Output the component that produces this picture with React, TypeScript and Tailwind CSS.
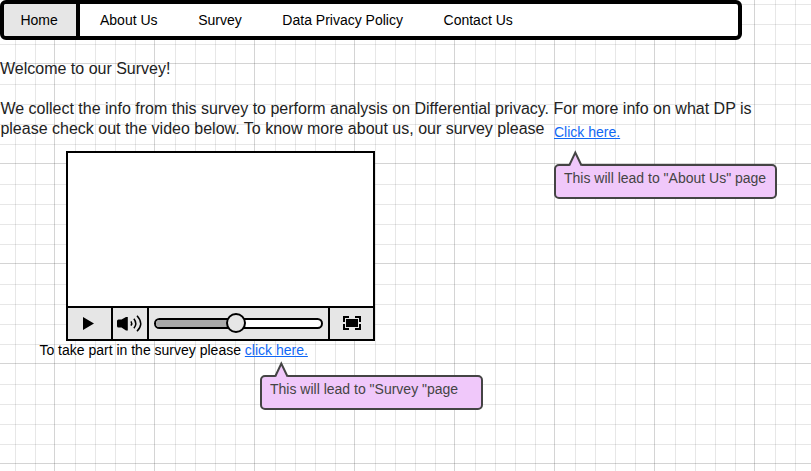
import type { ReactNode } from "react";

const navItems = [
  { label: "About Us", gap: "ml-5" },
  { label: "Survey", gap: "ml-[40.6px]" },
  { label: "Data Privacy Policy", gap: "ml-[40.6px]" },
  { label: "Contact Us", gap: "ml-[40.6px]" },
];

function NavBar() {
  return (
    <nav className="flex h-10 w-[742px] overflow-hidden rounded-md border-4 border-black bg-white text-sm leading-8 text-black">
      <a className="w-[76px] shrink-0 border-r-4 border-black bg-[#e6e6e6] pl-[16.4px]">Home</a>
      {navItems.map((item) => (
        <a key={item.label} className={`${item.gap} whitespace-nowrap`}>
          {item.label}
        </a>
      ))}
    </nav>
  );
}

function Callout({ children }: { children: ReactNode }) {
  return (
    <div className="relative h-[35px] w-[223px] rounded-[5px] border-2 border-[#444] bg-[#f0c8fa] pl-2 pt-[2px] text-sm leading-5 whitespace-nowrap text-[#444]">
      <svg className="absolute -top-[16px] left-3" width="16" height="17" viewBox="0 0 16 17">
        <path d="M1 17 L7.3 3 L14 17 Z" fill="#f0c8fa" />
        <path d="M1.2 15.5 L7.3 2.5 L13.5 15.5" fill="none" stroke="#444" strokeWidth="2" />
      </svg>
      {children}
    </div>
  );
}

function VideoPlayer() {
  return (
    <div className="ml-[66px] flex h-[190px] w-[309px] flex-col border-2 border-black bg-white">
      <div className="flex-1" />
      <div className="flex h-[33px] border-t-2 border-black bg-[#e6e6e6]">
        <div className="w-[45px] border-r-2 border-black">
          <svg width="43" height="31" viewBox="0 0 43 31">
            <path d="M15 9 L26 15.5 L15 22 Z" />
          </svg>
        </div>
        <div className="w-[36px] border-r-2 border-black">
          <svg width="34" height="31" viewBox="0 0 34 31">
            <path d="M4 13 Q4 11.5 5.5 11.5 H8.5 L13 9 H14.8 V22.4 H13 L8.5 19.5 H5.5 Q4 19.5 4 18 Z" />
            <g fill="none" stroke="#000" strokeWidth="1.5">
              <path d="M18 13.3 Q19.5 15.5 18 17.7" />
              <path d="M20.9 10.7 Q24.6 15.5 20.9 20.3" />
              <path d="M24 7.7 Q31.4 15.5 24 23.3" />
            </g>
          </svg>
        </div>
        <div className="flex w-[181px] items-center pl-[5px]">
          <div className="relative h-[11px] w-[169px] rounded-full border-2 border-black bg-white">
            <div className="h-full w-[80px] rounded-l-full bg-[#a9a9a9]" />
            <div className="absolute -top-[7px] left-[70px] size-5 rounded-full border-2 border-black bg-[#e6e6e6]" />
          </div>
        </div>
        <div className="flex-1 border-l-2 border-black">
          <svg width="43" height="31" viewBox="0 0 43 31" shapeRendering="crispEdges">
            <rect x="16" y="11" width="12" height="8" />
            <path d="M19 9 H14 V14 M25 9 H30 V14 M14 16 V21 H19 M30 16 V21 H25" fill="none" stroke="#000" strokeWidth="2" />
          </svg>
        </div>
      </div>
    </div>
  );
}

export default function App() {
  return (
    <main className="h-[471px] w-[811px] overflow-hidden bg-white bg-[linear-gradient(to_right,#0000002b_1px,transparent_1px,transparent_21px,#00000018_21px,#00000018_22px,transparent_22px,transparent_41px,#00000018_41px,#00000018_42px,transparent_42px,transparent_61px,#00000018_61px,#00000018_62px,transparent_62px,transparent_81px,#00000018_81px,#00000018_82px,transparent_82px),linear-gradient(to_bottom,#0000002b_1px,transparent_1px,transparent_21px,#00000018_21px,#00000018_22px,transparent_22px,transparent_41px,#00000018_41px,#00000018_42px,transparent_42px,transparent_61px,#00000018_61px,#00000018_62px,transparent_62px,transparent_81px,#00000018_81px,#00000018_82px,transparent_82px)] bg-[size:100px_100px] bg-[position:54px_63px] font-['Liberation_Sans',Arial,sans-serif]">
      <NavBar />
      <section className="mt-[19px] text-base leading-5 text-[#222]">
        <p>Welcome to our Survey!</p>
        <p className="mt-5 pl-[0.4px] whitespace-nowrap">
          We collect the info from this survey to perform analysis on Differential privacy. For more info on what DP is
        </p>
        <div className="flex h-5 whitespace-nowrap">
          <p className="w-[554px] pl-[0.4px]">please check out the video below. To know more about us, our survey please</p>
          <a className="pt-[3px] text-sm leading-5 text-[#1068f5] underline">Click here.</a>
        </div>
      </section>
      <div className="mt-3 flex items-start">
        <VideoPlayer />
        <div className="ml-[179px] mt-[13px]">
          <Callout>This will lead to "About Us" page</Callout>
        </div>
      </div>
      <p className="ml-[39.4px] text-sm leading-[18px] text-black">
        To take part in the survey please <a className="text-[#1068f5] underline">click here.</a>
      </p>
      <div className="ml-[260px] mt-4">
        <Callout>This will lead to "Survey "page</Callout>
      </div>
    </main>
  );
}
